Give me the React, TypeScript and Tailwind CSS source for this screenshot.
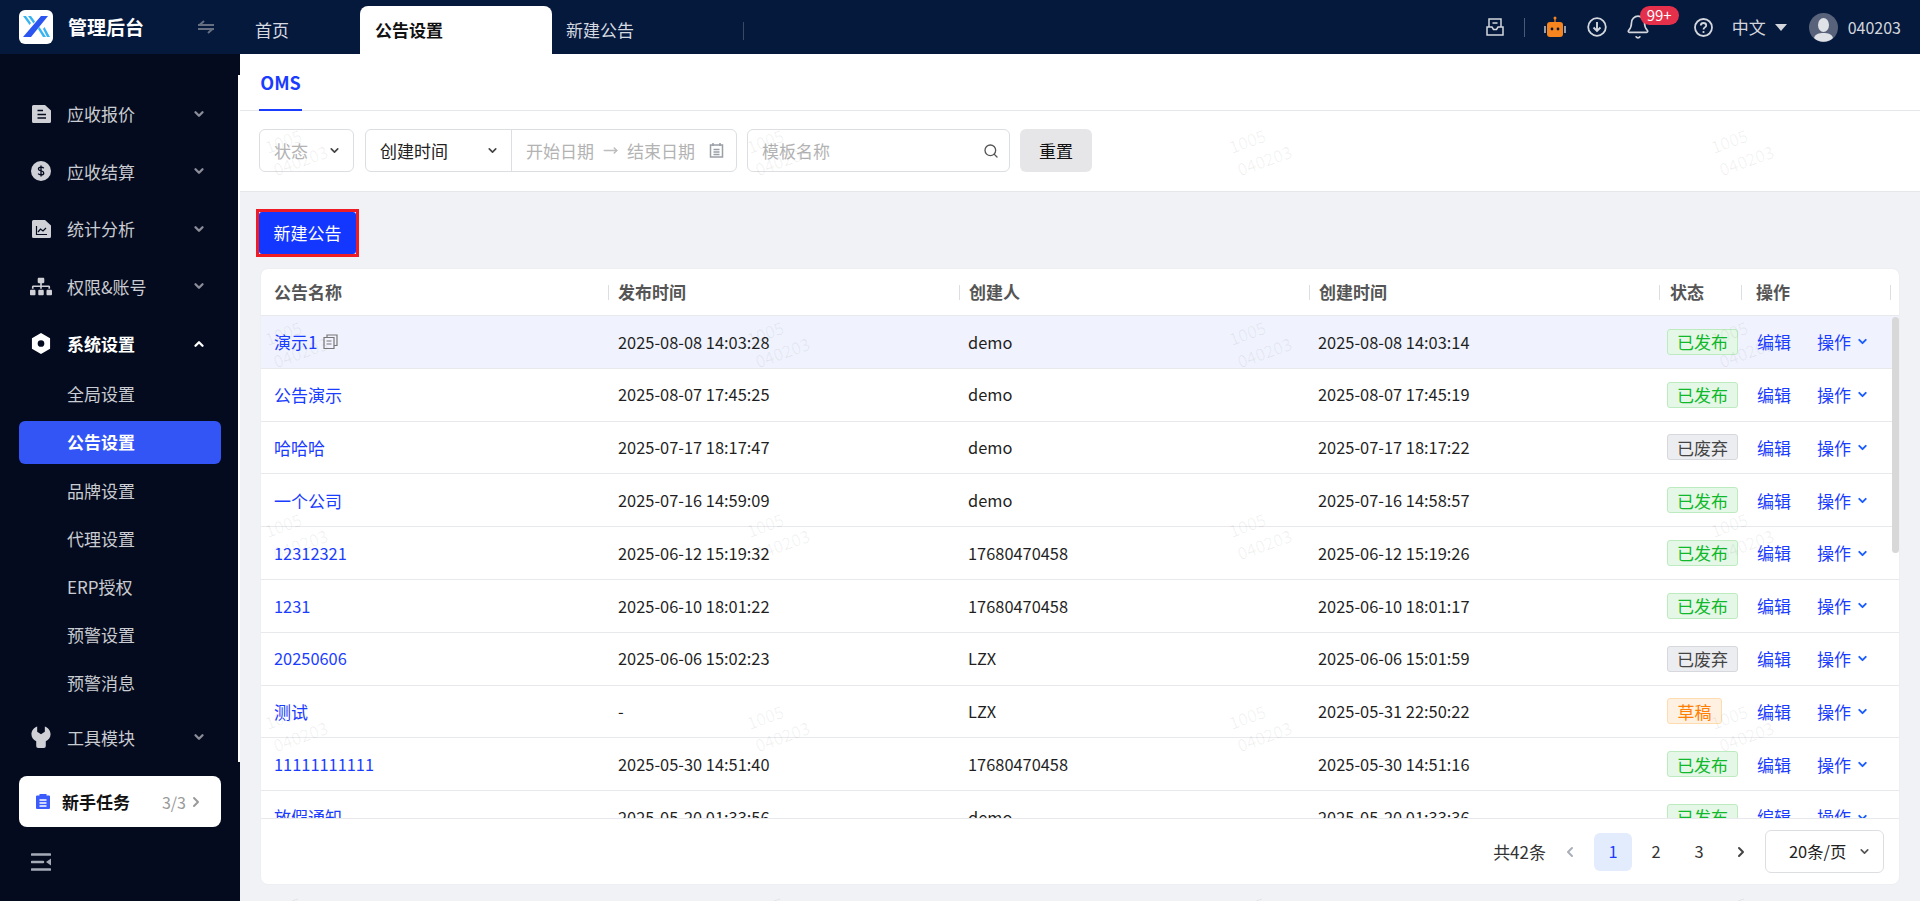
import { Bell, ChevronDown, ChevronLeft, ChevronRight, ChevronUp, MoveRight, Search } from "lucide-react";
import { FaSitemap } from "react-icons/fa";

const rows = [
  { name: "演示1", pub: "2025-08-08 14:03:28", by: "demo", at: "2025-08-08 14:03:14", status: "已发布", hover: true },
  { name: "公告演示", pub: "2025-08-07 17:45:25", by: "demo", at: "2025-08-07 17:45:19", status: "已发布" },
  { name: "哈哈哈", pub: "2025-07-17 18:17:47", by: "demo", at: "2025-07-17 18:17:22", status: "已废弃" },
  { name: "一个公司", pub: "2025-07-16 14:59:09", by: "demo", at: "2025-07-16 14:58:57", status: "已发布" },
  { name: "12312321", pub: "2025-06-12 15:19:32", by: "17680470458", at: "2025-06-12 15:19:26", status: "已发布" },
  { name: "1231", pub: "2025-06-10 18:01:22", by: "17680470458", at: "2025-06-10 18:01:17", status: "已发布" },
  { name: "20250606", pub: "2025-06-06 15:02:23", by: "LZX", at: "2025-06-06 15:01:59", status: "已废弃" },
  { name: "测试", pub: "-", by: "LZX", at: "2025-05-31 22:50:22", status: "草稿" },
  { name: "11111111111", pub: "2025-05-30 14:51:40", by: "17680470458", at: "2025-05-30 14:51:16", status: "已发布" },
  { name: "放假通知", pub: "2025-05-20 01:33:56", by: "demo", at: "2025-05-20 01:33:36", status: "已发布" },
];

const tagStyles: Record<string, string> = {
  已发布: "w-[71px] bg-[#e5f7e6] border-[#bcebc0] text-[#10b82c]",
  已废弃: "w-[71px] bg-[#ecedf1] border-[#d6d8dd] text-[#444444]",
  草稿: "w-[55px] bg-[#fff1e2] border-[#ffdcb0] text-[#ff7d00]",
};

const DocIcon = () => (
  <svg viewBox="0 0 19 18" className="w-[19px] h-[18px]">
    <path d="M1.500 0H13l6 5.500V16.500a1.500 1.500 0 0 1-1.500 1.500h-16A1.500 1.500 0 0 1 0 16.500v-15A1.500 1.500 0 0 1 1.500 0z" fill="#cfd1d6" />
    <path d="M5.500 5.500h5.500M5.500 9.500h8.500M5.500 13h8.500" stroke="#050b1e" strokeWidth="1.600" />
  </svg>
);

const CoinIcon = () => (
  <svg viewBox="0 0 22 22" className="w-[22px] h-[22px]">
    <circle cx="11" cy="11" r="11" fill="#cfd1d6" />
    <path d="M14 8c-.6-.8-1.600-1.200-3-1.200-1.600 0-2.800.7-2.800 2 0 2.800 5.800 1.400 5.800 4.300 0 1.300-1.300 2.100-3 2.100-1.400 0-2.500-.5-3.100-1.300M11 5v12" stroke="#050b1e" strokeWidth="1.500" fill="none" />
  </svg>
);

const ChartIcon = () => (
  <svg viewBox="0 0 19 18" className="w-[19px] h-[18px]">
    <path d="M1.500 0H13l6 5.500V16.500a1.500 1.500 0 0 1-1.500 1.500h-16A1.500 1.500 0 0 1 0 16.500v-15A1.500 1.500 0 0 1 1.500 0z" fill="#cfd1d6" />
    <path d="M4.500 6v8.500h10.500M6 12l2.500-3 2.500 2 3-3" stroke="#050b1e" strokeWidth="1.200" fill="none" />
  </svg>
);

const NutIcon = () => (
  <svg viewBox="0 0 20 22" className="w-[20px] h-[21px]">
    <path fillRule="evenodd" d="M10 0l9.500 5.500v11L10 22 .5 16.500v-11zM10 7.500a3.500 3.500 0 1 0 0 7 3.500 3.500 0 0 0 0-7z" fill="#ffffff" />
  </svg>
);

const WrenchIcon = () => (
  <svg viewBox="0 0 20 23" className="w-[20px] h-[22px]">
    <path d="M6 .5v5.500l4 2.500 4-2.500V.5c3.500 1.300 6 4.400 6 8 0 3.300-2 6-5 7.400V21a2 2 0 0 1-2 2H7a2 2 0 0 1-2-2v-5.100c-3-1.400-5-4.100-5-7.400 0-3.600 2.500-6.700 6-8z" fill="#cfd1d6" />
  </svg>
);

const menuTop = [
  { label: "应收报价", icon: <DocIcon /> },
  { label: "应收结算", icon: <CoinIcon /> },
  { label: "统计分析", icon: <ChartIcon /> },
  { label: "权限&账号", icon: <FaSitemap className="text-[#cfd1d6] w-[22px] h-[19px] shrink-0" /> },
];

const subMenu = ["全局设置", "公告设置", "品牌设置", "代理设置", "ERP授权", "预警设置", "预警消息"];

const MenuItem = ({ label, icon, open }: { label: string; icon: React.ReactNode; open?: boolean }) => (
  <div className="h-[57.5px] flex items-center pl-[31px] pr-[34px]">
    <div className="w-[20px] flex justify-center">{icon}</div>
    <span className={`ml-[16px] flex-1 text-[17px] ${open ? "text-white font-bold" : "text-[#c9ccd2]"}`}>{label}</span>
    {open ? (
      <ChevronUp className="w-[14px] h-[14px] text-white" strokeWidth={4} />
    ) : (
      <ChevronDown className="w-[14px] h-[14px] text-[#8b8e98]" strokeWidth={4} />
    )}
  </div>
);

const Sidebar = () => (
  <aside className="w-[240px] shrink-0 bg-[#050b1e] flex flex-col relative">
    <div className="absolute right-0 top-[21px] w-[2px] h-[687px] bg-white" />
    <div className="pt-[31px]">
      {menuTop.map((m) => (
        <MenuItem key={m.label} label={m.label} icon={m.icon} />
      ))}
      <MenuItem label="系统设置" icon={<NutIcon />} open />
      <div className="flex flex-col gap-[5.2px] mx-[19px] w-[202px]">
        {subMenu.map((s) => (
          <div
            key={s}
            className={`h-[43px] flex items-center pl-[48px] rounded-md text-[17px] ${s === "公告设置" ? "bg-[#3355f6] text-white font-bold" : "text-[#c9ccd2]"}`}
          >
            {s}
          </div>
        ))}
      </div>
      <div className="mt-[4px]">
        <MenuItem label="工具模块" icon={<WrenchIcon />} />
      </div>
    </div>
    <div className="mx-[19px] w-[202px] h-[51px] mt-[10px] bg-white rounded-lg flex items-center pl-[17px] pr-[17px]">
      <svg viewBox="0 0 14 15" className="w-[14px] h-[15px]">
        <path d="M1 1.500h2.500V0h7v1.500H13a1 1 0 0 1 1 1V14a1 1 0 0 1-1 1H1a1 1 0 0 1-1-1V2.500a1 1 0 0 1 1-1z" fill="#3b5bfb" />
        <path d="M3.500 6h7M3.500 9h7M3.500 12h7" stroke="#ffffff" strokeWidth="1.300" />
      </svg>
      <span className="ml-[12px] flex-1 text-[17px] font-bold text-[#111111]">新手任务</span>
      <span className="text-base text-[#9a9a9a]">3/3</span>
      <ChevronRight className="w-[16px] h-[16px] ml-[2px] text-[#9a9a9a]" strokeWidth={3} />
    </div>
    <div className="pl-[31px] mt-[25px]">
      <svg viewBox="0 0 20 20" className="w-[20px] h-[20px]">
        <path d="M1 2.500h18M1 10h11M1 17.500h18" stroke="#a5acb8" strokeWidth="2.600" strokeLinecap="round" />
        <path d="M20 6.500v7l-5-3.500z" fill="#a5acb8" />
      </svg>
    </div>
  </aside>
);

const Header = () => (
  <header className="h-[54px] bg-[#05193d] flex items-stretch shrink-0">
    <div className="w-[240px] flex items-center pl-[19px] shrink-0">
      <svg viewBox="0 0 34 34" className="w-[34px] h-[34px]">
        <rect width="34" height="34" rx="6" fill="#ffffff" />
        <path d="M22 6h7L12 27H4z" fill="#2a55f0" />
        <path d="M4 6h3l5 7-1.500 2zM9 6h3l4 5.500-1.500 2z" fill="#39b4f2" />
        <path d="M19 19l1.500-2L27 27h-3zM24 19l1.500-2L31 27h-3z" fill="#39b4f2" />
      </svg>
      <span className="ml-[15px] text-[19px] font-bold text-white">管理后台</span>
      <svg viewBox="0 0 16 14" className="ml-[54px] w-[16px] h-[14px]">
        <path d="M0 5h16M6 1L1.500 5M0 9h16M10 13l4.500-4" stroke="#666f80" strokeWidth="2" fill="none" />
      </svg>
    </div>
    <div className="flex items-end">
      <div className="w-[120px] h-[48px] flex items-center pl-[15px] text-[17px] text-[#d6d9e0]">首页</div>
      <div className="w-[192px] h-[48px] bg-white rounded-t-lg flex items-center pl-[15px] text-[17px] font-bold text-[#111111]">公告设置</div>
      <div className="w-[192px] h-[48px] flex items-center pl-[14px] text-[17px] text-[#d6d9e0] relative">
        新建公告
        <div className="absolute right-0 top-[16px] w-px h-[18px] bg-[#3a4863]" />
      </div>
    </div>
    <div className="flex-1 flex items-center justify-end pr-[19px] text-[#d3d6dc]">
      <svg viewBox="0 0 18 18" className="w-[18px] h-[18px]">
        <path d="M3 9V1h12v8M1 9v8h16V9h-5l-1.500 2.500h-3L6 9zM6.500 5h5" stroke="#d3d6dc" strokeWidth="1.500" fill="none" />
      </svg>
      <div className="w-px h-[19px] bg-[#4b5a76] ml-[20px]" />
      <svg viewBox="0 0 22 22" className="ml-[19px] w-[22px] h-[22px]">
        <rect x="3" y="6" width="16" height="15" rx="3" fill="#f6851f" />
        <circle cx="11" cy="2" r="1.500" fill="#f6851f" />
        <rect x="10.400" y="2" width="1.200" height="4" fill="#f6851f" />
        <circle cx="8" cy="13" r="1.400" fill="#05193d" />
        <circle cx="14" cy="13" r="1.400" fill="#05193d" />
        <path d="M1 10v7M21 10v7" stroke="#d3d6dc" strokeWidth="1.400" />
      </svg>
      <svg viewBox="0 0 20 20" className="ml-[21px] w-[20px] h-[20px]">
        <circle cx="10" cy="10" r="8.800" stroke="#d3d6dc" strokeWidth="1.800" fill="none" />
        <path d="M10 5v9M6.500 10.500l3.500 3.500 3.500-3.500" stroke="#d3d6dc" strokeWidth="1.900" fill="none" />
      </svg>
      <div className="ml-[18px] relative">
        <Bell className="w-[26px] h-[26px]" strokeWidth={1.500} />
        <span className="absolute left-[15px] -top-[8px] h-[19px] w-[39px] rounded-full bg-[#e5304c] text-white text-[15px] flex items-center justify-center">99+</span>
      </div>
      <svg viewBox="0 0 19 19" className="ml-[43px] w-[19px] h-[19px]">
        <circle cx="9.500" cy="9.500" r="8.500" stroke="#d3d6dc" strokeWidth="1.800" fill="none" />
        <path d="M6.800 7.500c0-1.500 1.200-2.500 2.700-2.500s2.700 1 2.700 2.400c0 2-2.700 2-2.700 4" stroke="#d3d6dc" strokeWidth="1.800" fill="none" />
        <circle cx="9.500" cy="14" r="1.100" fill="#d3d6dc" />
      </svg>
      <span className="ml-[19px] text-[17px]">中文</span>
      <svg viewBox="0 0 12 7" className="ml-[9px] w-[12px] h-[7px]">
        <path d="M0 0h12L6 7z" fill="#d3d6dc" />
      </svg>
      <svg viewBox="0 0 29 29" className="ml-[22px] w-[29px] h-[29px]">
        <circle cx="14.500" cy="14.500" r="14.500" fill="#58627a" />
        <ellipse cx="14.500" cy="12" rx="5.500" ry="7" fill="#dfe2e6" />
        <path d="M5 25c1-4 5-5 9.500-5s8.500 1 9.500 5a14 14 0 0 1-19 0z" fill="#dfe2e6" />
      </svg>
      <span className="ml-[10px] text-base">040203</span>
    </div>
  </header>
);

const Filters = () => (
  <div className="flex gap-[11px] pt-[18px] pl-[19px] text-[17px]">
    <div className="w-[95px] h-[43px] border border-[#dcdee2] rounded-md flex items-center pl-[14px] pr-[12px] justify-between text-[#b3b3b3]">
      状态
      <ChevronDown className="w-[13px] h-[13px] text-[#444444]" strokeWidth={3} />
    </div>
    <div className="w-[372px] h-[43px] border border-[#dcdee2] rounded-md flex items-center">
      <div className="w-[146px] h-full border-r border-[#dcdee2] flex items-center justify-between pl-[14px] pr-[12px] text-[#222222]">
        创建时间
        <ChevronDown className="w-[13px] h-[13px] text-[#444444]" strokeWidth={3} />
      </div>
      <span className="ml-[14px] text-[#b3b3b3]">开始日期</span>
      <MoveRight className="mx-[9px] w-[15px] h-[15px] text-[#bdbdbd]" strokeWidth={2.500} />
      <span className="text-[#b3b3b3]">结束日期</span>
      <svg viewBox="0 0 15 15" className="ml-[14px] w-[15px] h-[15px]">
        <path d="M1.500 2h12v12h-12zM4 0v3M11 0v3M4.500 6.500h6M4.500 9h6M4.500 11.500h6" stroke="#9a9ea6" strokeWidth="1.500" fill="none" />
      </svg>
    </div>
    <div className="w-[263px] h-[43px] -ml-[1px] border border-[#dcdee2] rounded-md flex items-center justify-between pl-[14px] pr-[10px] text-[#b3b3b3]">
      模板名称
      <Search className="w-[16px] h-[16px] text-[#555555]" strokeWidth={2} />
    </div>
    <div className="w-[72px] h-[43px] -ml-[1px] bg-[#e6e6e8] rounded-md flex items-center justify-center text-[#111111]">重置</div>
  </div>
);

const colClass = "grid grid-cols-[347px_351px_350px_350px_82px_150px] items-center";

const TableHead = () => (
  <div className={`${colClass} h-[47px] border-b border-[#e8e9ed] text-[17px] font-bold text-[#555555]`}>
    {["公告名称", "发布时间", "创建人", "创建时间", "状态", "操作"].map((h, i) => (
      <div key={h} className={`h-[15px] flex items-center ${i === 0 ? "pl-[13px]" : i === 4 ? "pl-[10px] border-l border-[#dcdee2]" : i === 5 ? "pl-[14px] border-x border-[#dcdee2]" : "pl-[9px] border-l border-[#dcdee2]"}`}>
        {h}
      </div>
    ))}
  </div>
);

const TableRow = ({ row }: { row: (typeof rows)[number] }) => (
  <div className={`${colClass} h-[52.8px] border-b border-[#e8e9ed] text-[16.4px] text-[#1f1f1f] ${row.hover ? "bg-[#f0f3fd]" : ""}`}>
    <div className={`pl-[13px] flex items-center text-[#1a3cff] ${/^\d+$/.test(row.name) ? "" : "text-[17px]"}`}>
      {row.name}
      {row.hover && (
        <svg viewBox="0 0 15 15" className="ml-[6px] w-[15px] h-[15px]">
          <path d="M1 3.500h10v11H1zM4 3.500V1h10v10.500h-3M3.500 7h5M3.500 10h5" stroke="#777777" strokeWidth="1.200" fill="none" />
        </svg>
      )}
    </div>
    <div className="pl-[10px]">{row.pub}</div>
    <div className="pl-[9px]">{row.by}</div>
    <div className="pl-[9px]">{row.at}</div>
    <div className="pl-[8px] text-[17px]">
      <span className={`h-[26px] border rounded-[3px] flex items-center justify-center ${tagStyles[row.status]}`}>{row.status}</span>
    </div>
    <div className="pl-[16px] flex items-center text-[17px] text-[#1a3cff]">
      编辑
      <span className="ml-[26px]">操作</span>
      <ChevronDown className="ml-[5px] w-[13px] h-[13px] text-[#1a5cff]" strokeWidth={3.500} />
    </div>
  </div>
);

const Pagination = () => (
  <div className="h-[66px] border-t border-[#e8e9ed] flex items-center justify-end pr-[15px] text-[16.4px] text-[#333333] shrink-0">
    <span className="text-[17px]">共42条</span>
    <ChevronLeft className="ml-[16px] w-[16px] h-[16px] text-[#a9afb8]" strokeWidth={3} />
    <div className="ml-[16px] w-[38px] h-[38px] rounded-md bg-[#e3ecfd] text-[#1a3cff] flex items-center justify-center">1</div>
    <div className="ml-[5px] w-[38px] h-[38px] flex items-center justify-center">2</div>
    <div className="ml-[5px] w-[38px] h-[38px] flex items-center justify-center">3</div>
    <ChevronRight className="ml-[15px] w-[16px] h-[16px] text-[#444444]" strokeWidth={3} />
    <div className="ml-[16px] w-[119px] h-[43px] border border-[#dcdee2] rounded-md flex items-center pl-[23px] pr-[12px] justify-between text-[#222222]">
      20条/页
      <ChevronDown className="w-[13px] h-[13px] text-[#555555]" strokeWidth={3} />
    </div>
  </div>
);

const Watermarks = () => (
  <div className="absolute left-[55px] top-[53px] grid grid-cols-[repeat(4,482px)] auto-rows-[192px] pointer-events-none">
    {Array.from({ length: 20 }).map((_, i) => (
      <div key={i} className="flex items-center justify-center">
        <div className="-rotate-[20deg] text-[17px] leading-[24px] text-black/[0.06]">
          1005
          <br />
          040203
        </div>
      </div>
    ))}
  </div>
);

export default function App() {
  return (
    <div className="relative h-[901px] flex flex-col overflow-hidden bg-[#f0f2f6] font-['Noto_Sans_CJK_SC','Noto_Sans',sans-serif]">
      <Header />
      <div className="flex flex-1 min-h-0">
        <Sidebar />
        <main className="flex-1 min-w-0 flex flex-col">
          <div className="h-[138px] bg-white border-b border-[#e6e7ea] shrink-0">
            <div className="h-[57px] border-b border-[#e6e7ea] pl-[19px]">
              <div className="w-[43px] h-[57px] pt-[1px] border-b-2 border-[#1a3cff] flex items-center justify-center text-[18px] font-semibold text-[#1a3cff]">OMS</div>
            </div>
            <Filters />
          </div>
          <div className="mt-[17px] ml-[16px] w-[103px] h-[48px] border-[3px] border-[#ee1c25] shrink-0">
            <div className="h-full bg-[#1337ff] rounded-[3px] text-white text-[17px] flex items-center justify-center">新建公告</div>
          </div>
          <section className="mt-[11px] ml-[20px] w-[1640px] h-[617px] bg-white rounded-lg border border-[#eeeff3] flex flex-col overflow-hidden">
            <TableHead />
            <div className="relative flex-1 min-h-0 overflow-hidden">
              {rows.map((r) => (
                <TableRow key={r.name} row={r} />
              ))}
              <div className="absolute right-0 top-[1px] w-[7px] h-[236px] bg-[#d8d8d8] rounded-full" />
            </div>
            <Pagination />
          </section>
        </main>
      </div>
      <Watermarks />
    </div>
  );
}
